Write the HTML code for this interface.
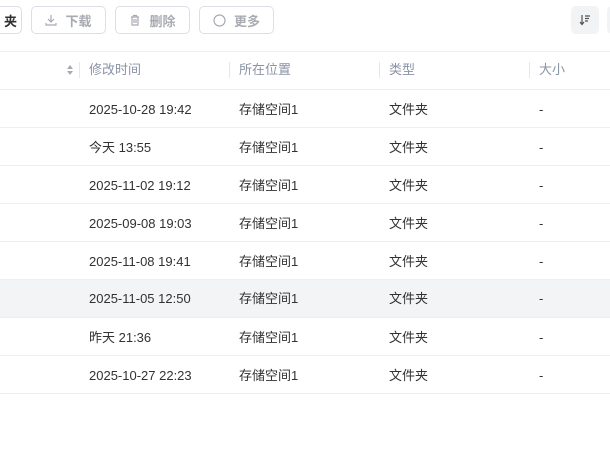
<!DOCTYPE html>
<html><head><meta charset="utf-8"><style>
*{margin:0;padding:0;box-sizing:border-box}
body{width:610px;height:455px;overflow:hidden;background:#fff;font-family:"Liberation Sans","Noto Sans CJK SC",sans-serif;font-size:13px;color:#303133;position:relative}
.btn{position:absolute;top:6px;height:28px;border:1px solid #dcdfe6;border-radius:5px;color:#a8abb2;font-size:13px;font-weight:bold;display:flex;align-items:center;justify-content:center;gap:8px}
.hl{position:absolute;left:0;width:610px;height:1px;background:#ebeef5}
.row{position:absolute;left:0;width:610px;height:38px}
.c{position:absolute;top:2px;line-height:38px;white-space:nowrap}
.h{color:#8a93a6;top:0}
.hv .c{top:0;line-height:37px}
.vd{position:absolute;top:62px;width:1px;height:16px;background:#e4e7ed}
</style></head><body>
<div class="btn" style="left:-20px;width:42px;color:#303133;justify-content:flex-end;padding-right:4px">夹</div>
<div class="btn" style="left:31px;width:75px"><svg width="12" height="12" viewBox="0 0 12 12" fill="none" stroke="#a8abb2" stroke-width="1.2"><path d="M6 1v7M3 5l3 3 3-3M1 9v2h10V9"/></svg>下载</div>
<div class="btn" style="left:115px;width:75px"><svg width="12" height="12" viewBox="0 0 12 12" fill="none" stroke="#a8abb2" stroke-width="1.2"><path d="M2 3h8M4.5 3V1.5h3V3M3 3v8h6V3M5 5v4M7 5v4"/></svg>删除</div>
<div class="btn" style="left:199px;width:75px"><svg width="13" height="13" viewBox="0 0 13 13" fill="none" stroke="#a8abb2" stroke-width="1.2"><circle cx="6.5" cy="6.5" r="5.5"/></svg>更多</div>
<div style="position:absolute;left:571px;top:6px;width:28px;height:28px;background:#f2f3f5;border-radius:5px"><svg style="position:absolute;left:8px;top:8px" width="12" height="12" viewBox="0 0 12 12" fill="none" stroke="#555" stroke-width="1.2"><path d="M3 1v9M1 8l2 2.5L5 8M6 2h5M6 4.5h4M6 7h3"/></svg></div>
<div style="position:absolute;left:607px;top:6px;width:10px;height:28px;background:#f2f3f5;border-radius:5px"></div>
<div class="hl" style="top:51px"></div>
<div class="row" style="top:51px">
<div style="position:absolute;left:67px;top:11px;width:0;height:0;border:3.5px solid transparent;border-bottom:4px solid #a8abb2"></div>
<div style="position:absolute;left:67px;top:20px;width:0;height:0;border:3.5px solid transparent;border-top:4px solid #a8abb2"></div>
<div class="c h" style="left:89px">修改时间</div><div class="c h" style="left:239px">所在位置</div><div class="c h" style="left:389px">类型</div><div class="c h" style="left:539px">大小</div></div>
<div class="vd" style="left:79px"></div><div class="vd" style="left:229px"></div><div class="vd" style="left:379px"></div><div class="vd" style="left:529px"></div>
<div class="hl" style="top:89px"></div>
<div class="row" style="top:89px"><div class="c" style="left:89px">2025-10-28 19:42</div><div class="c" style="left:239px">存储空间1</div><div class="c" style="left:389px">文件夹</div><div class="c" style="left:539px">-</div></div>
<div class="hl" style="top:127px"></div>
<div class="row" style="top:127px"><div class="c" style="left:89px">今天 13:55</div><div class="c" style="left:239px">存储空间1</div><div class="c" style="left:389px">文件夹</div><div class="c" style="left:539px">-</div></div>
<div class="hl" style="top:165px"></div>
<div class="row" style="top:165px"><div class="c" style="left:89px">2025-11-02 19:12</div><div class="c" style="left:239px">存储空间1</div><div class="c" style="left:389px">文件夹</div><div class="c" style="left:539px">-</div></div>
<div class="hl" style="top:203px"></div>
<div class="row" style="top:203px"><div class="c" style="left:89px">2025-09-08 19:03</div><div class="c" style="left:239px">存储空间1</div><div class="c" style="left:389px">文件夹</div><div class="c" style="left:539px">-</div></div>
<div class="hl" style="top:241px"></div>
<div class="row" style="top:241px"><div class="c" style="left:89px">2025-11-08 19:41</div><div class="c" style="left:239px">存储空间1</div><div class="c" style="left:389px">文件夹</div><div class="c" style="left:539px">-</div></div>
<div class="hl" style="top:279px"></div>
<div class="row hv" style="top:280px;height:37px;background:#f3f4f6"><div class="c" style="left:89px">2025-11-05 12:50</div><div class="c" style="left:239px">存储空间1</div><div class="c" style="left:389px">文件夹</div><div class="c" style="left:539px">-</div></div>
<div class="hl" style="top:317px"></div>
<div class="row" style="top:317px"><div class="c" style="left:89px">昨天 21:36</div><div class="c" style="left:239px">存储空间1</div><div class="c" style="left:389px">文件夹</div><div class="c" style="left:539px">-</div></div>
<div class="hl" style="top:355px"></div>
<div class="row" style="top:355px"><div class="c" style="left:89px">2025-10-27 22:23</div><div class="c" style="left:239px">存储空间1</div><div class="c" style="left:389px">文件夹</div><div class="c" style="left:539px">-</div></div>
<div class="hl" style="top:393px"></div>
</body></html>
